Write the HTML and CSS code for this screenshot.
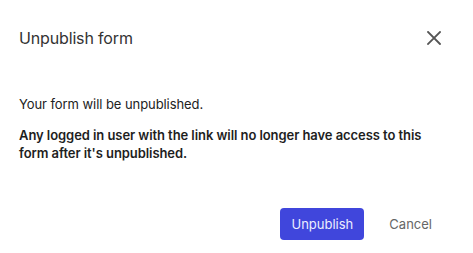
FILE: index.html
```html
<!DOCTYPE html>
<html>
<head>
<meta charset="utf-8">
<link rel="stylesheet" href="styles.css">
</head>
<body>
<div class="dialog">
  <div class="header">
    <h2 class="title">Unpublish form</h2>
    <button class="close" aria-label="Close">
      <svg width="14" height="14" viewBox="0 0 14 14"><path d="M1 1L13 13M13 1L1 13" stroke="#555" stroke-width="1.8" stroke-linecap="square"/></svg>
    </button>
  </div>
  <div class="content">
    <p class="text">Your form will be unpublished.</p>
    <p class="text bold">Any logged in user with the link will no longer have access to this form after it's unpublished.</p>
  </div>
  <div class="footer">
    <button class="btn primary">Unpublish</button>
    <button class="btn link">Cancel</button>
  </div>
</div>
</body>
</html>
```
FILE: styles.css
```css
html, body {
  margin: 0;
  padding: 0;
  background: #fff;
}
body {
  font-family: Inter, "Noto Sans", sans-serif;
  color: #222;
}
.dialog {
  width: 473px;
  height: 253px;
  box-sizing: border-box;
  padding: 0 19px;
}
.header {
  display: flex;
  align-items: center;
  justify-content: space-between;
  height: 76px;
}
.title {
  margin: 0;
  font-size: 16px;
  font-weight: 400;
  letter-spacing: -0.15px;
  color: #333;
}
.close {
  border: 0;
  background: none;
  padding: 0;
  margin-right: 13px;
  width: 14px;
  height: 14px;
  display: flex;
}
.content {
  padding-top: 19px;
  max-width: 420px;
}
.text {
  margin: 0 0 13px;
  font-size: 13px;
  line-height: 18px;
  letter-spacing: -0.07px;
  color: #222;
}
.bold {
  font-weight: 600;
  color: #1e1e1e;
}
.footer {
  display: flex;
  justify-content: flex-end;
  align-items: center;
  gap: 25px;
  margin-top: 46px;
  padding-right: 22px;
}
.btn {
  font-family: Inter, "Noto Sans", sans-serif;
  font-size: 13px;
  border: 0;
  cursor: pointer;
}
.primary {
  background: #4046dc;
  color: #eceeff;
  height: 32px;
  width: 84px;
  border-radius: 4px;
  padding: 0;
}
.link {
  background: none;
  color: #666;
  padding: 0;
}
```
